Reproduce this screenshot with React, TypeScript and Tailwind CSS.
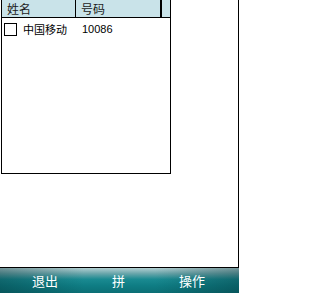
export default function App() {
  const font = { fontFamily: '"Noto Sans CJK SC", "Liberation Sans", sans-serif' };
  return (
    <div className="flex h-[293px] w-[239px] flex-col bg-white" style={font}>
      {/* main area */}
      <div className="h-[268px] border-r border-b border-black bg-white">
        <div className="ml-[1px] h-[174px] w-[170px] border-x border-b border-black">
          {/* header */}
          <div className="flex h-[18px] border-b border-black bg-[#c9e3e9] text-[12px] leading-[18px] text-[#1b1b1b]">
            <div className="w-[74px] border-r border-black pl-[5px]">姓名</div>
            <div className="w-[86px] border-r-2 border-black pl-[5px]">号码</div>
            <div className="flex-1" />
          </div>
          {/* row */}
          <div className="flex h-[20px] items-center pt-[3px] text-[11px] text-black">
            <div className="ml-[2px] h-[13px] w-[13px] border border-black bg-white" />
            <div className="ml-[6px] w-[55px]">中国移动</div>
            <div className="ml-[4px] text-[11px]" style={{ fontFamily: '"Liberation Sans", sans-serif' }}>
              10086
            </div>
          </div>
        </div>
      </div>
      {/* soft key bar */}
      <div className="flex h-[25px] items-center justify-between bg-[linear-gradient(to_right,rgba(0,40,45,0.35),rgba(0,0,0,0)_35%,rgba(0,0,0,0)_65%,rgba(0,40,45,0.35)),linear-gradient(to_bottom,#b3cfd2_0%,#6aa6ab_22%,#1a8a91_45%,#0f7d84_70%,#0b6f75_100%)] pl-[32px] pr-[34px] text-[13px] leading-none text-white">
        <span>退出</span>
        <span>拼</span>
        <span>操作</span>
      </div>
    </div>
  );
}
